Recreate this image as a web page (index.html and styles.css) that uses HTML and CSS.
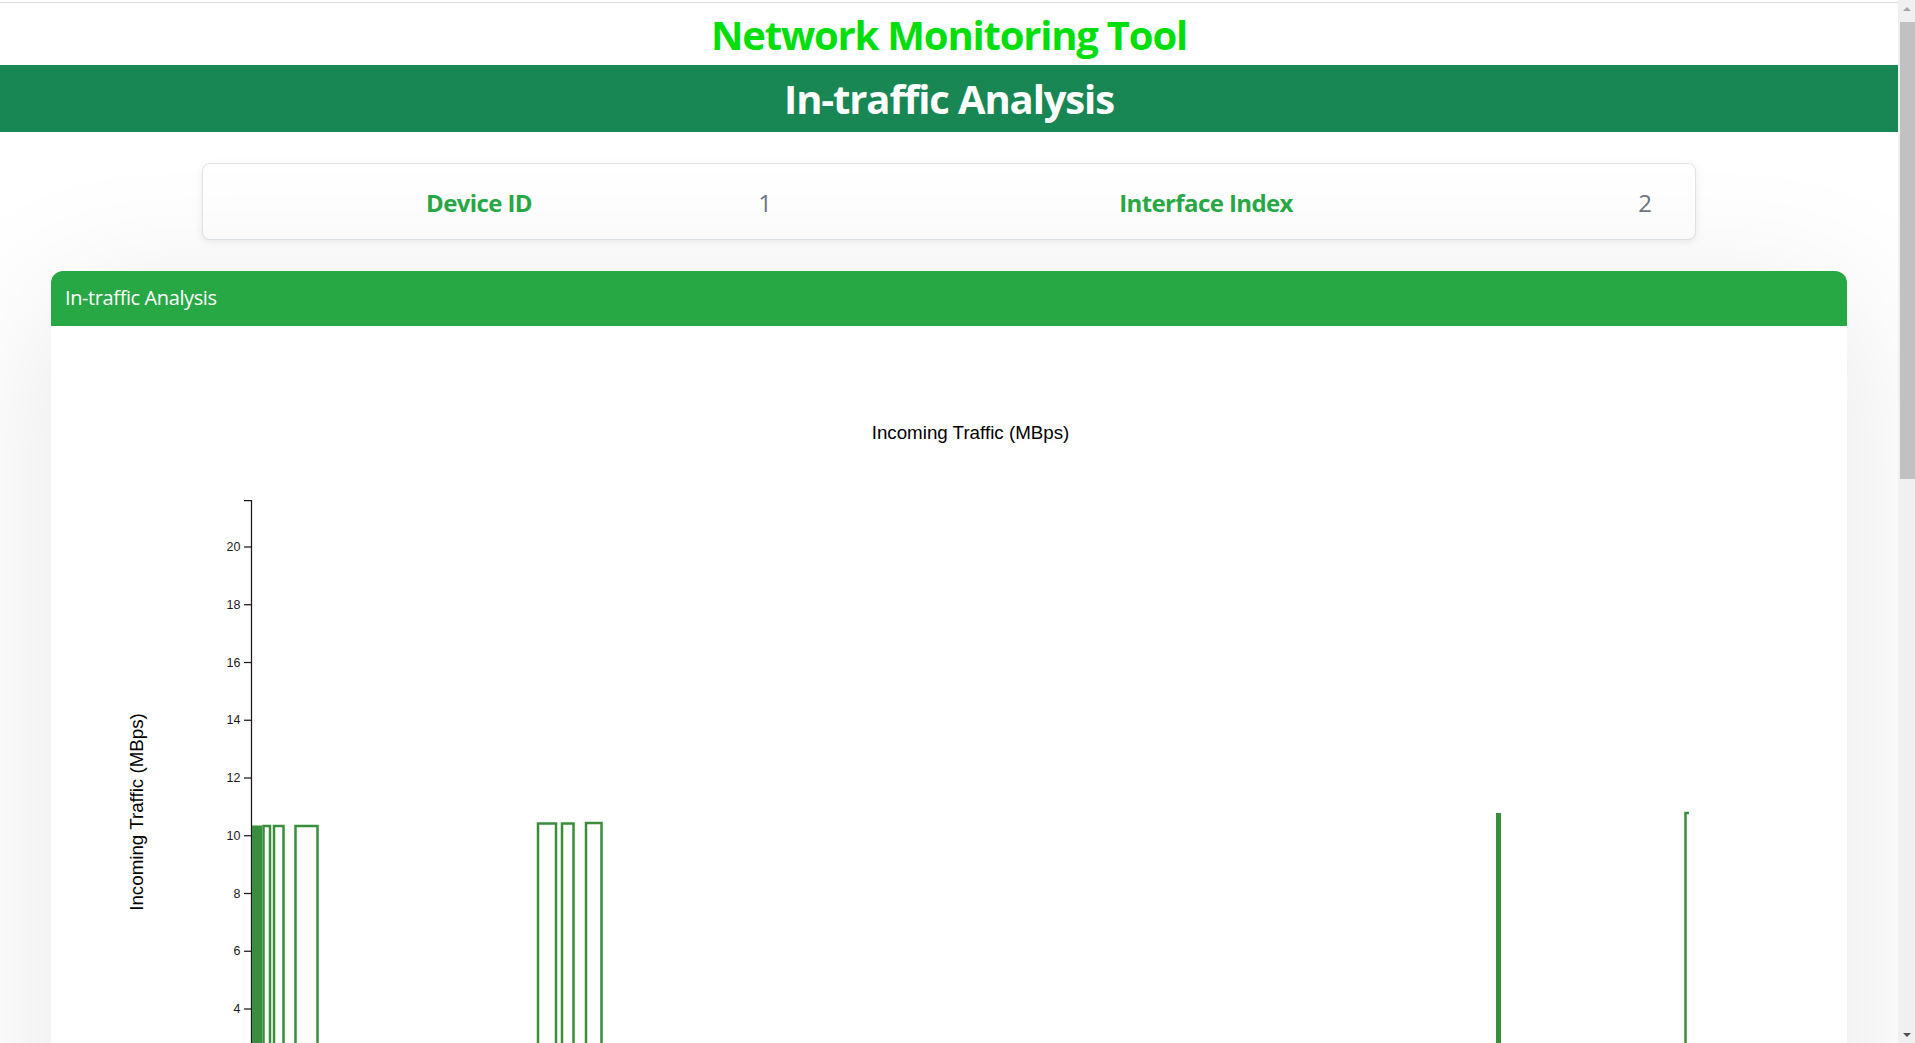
FILE: index.html
```html
<!DOCTYPE html>
<html lang="en">
<head>
<meta charset="utf-8">
<title>Network Monitoring Tool</title>
<link rel="stylesheet" href="styles.css">
</head>
<body>
<div class="page">
<div class="topline"></div>
<header class="site-header">
  <h1 class="site-title">Network Monitoring Tool</h1>
</header>
<div class="banner">
  <h2 class="banner-title">In-traffic Analysis</h2>
</div>
<main class="content">
  <section class="info-card">
    <div class="info-label">Device ID</div>
    <div class="info-value">1</div>
    <div class="info-label">Interface Index</div>
    <div class="info-value">2</div>
  </section>
  <section class="panel">
    <div class="panel-header">In-traffic Analysis</div>
    <div class="panel-body">
      <svg class="chart" width="1796" height="1940" viewBox="51 326 1796 1940" xmlns="http://www.w3.org/2000/svg">
        <text class="chart-title" x="970.5" y="438.5" text-anchor="middle">Incoming Traffic (MBps)</text>
        <text class="axis-title" transform="translate(143,812) rotate(-90)" text-anchor="middle">Incoming Traffic (MBps)</text>
        <g class="y-axis">
          <path class="domain" d="M244,500.5H251.5V1124.5H244"/>
          <g class="tick"><line x1="244" x2="251.5" y1="547" y2="547"/><text x="240.5" y="551">20</text></g>
          <g class="tick"><line x1="244" x2="251.5" y1="604.75" y2="604.75"/><text x="240.5" y="608.75">18</text></g>
          <g class="tick"><line x1="244" x2="251.5" y1="662.5" y2="662.5"/><text x="240.5" y="666.5">16</text></g>
          <g class="tick"><line x1="244" x2="251.5" y1="720.25" y2="720.25"/><text x="240.5" y="724.25">14</text></g>
          <g class="tick"><line x1="244" x2="251.5" y1="778" y2="778"/><text x="240.5" y="782">12</text></g>
          <g class="tick"><line x1="244" x2="251.5" y1="835.75" y2="835.75"/><text x="240.5" y="839.75">10</text></g>
          <g class="tick"><line x1="244" x2="251.5" y1="893.5" y2="893.5"/><text x="240.5" y="897.5">8</text></g>
          <g class="tick"><line x1="244" x2="251.5" y1="951.25" y2="951.25"/><text x="240.5" y="955.25">6</text></g>
          <g class="tick"><line x1="244" x2="251.5" y1="1009" y2="1009"/><text x="240.5" y="1013">4</text></g>
          <g class="tick"><line x1="244" x2="251.5" y1="1066.75" y2="1066.75"/></g>
          <g class="tick"><line x1="244" x2="251.5" y1="1124.5" y2="1124.5"/></g>
        </g>
        <g class="bars">
          <rect class="bar-solid" x="252" y="825.5" width="10" height="299"/>
          <rect class="bar" x="263.5" y="826" width="6.5" height="298.5"/>
          <rect class="bar" x="274" y="826" width="9.5" height="298.5"/>
          <rect class="bar" x="295.5" y="826" width="22" height="298.5"/>
          <rect class="bar" x="538" y="823.5" width="18" height="301"/>
          <rect class="bar" x="562" y="823.5" width="11.5" height="301"/>
          <rect class="bar" x="586" y="823" width="15.5" height="301.5"/>
          <rect class="bar-solid" x="1496" y="813" width="5" height="311.5"/>
          <path class="bar-line" d="M1685.5,1124.5V813H1689"/>
        </g>
        <path class="x-axis" d="M251.5,1124.5H1830"/>
      </svg>
    </div>
  </section>
</main>
</div>
<div class="scrollbar" aria-hidden="true">
  <div class="sb-btn sb-up"></div>
  <div class="sb-thumb"></div>
  <div class="sb-track"></div>
  <div class="sb-btn sb-down"></div>
</div>
</body>
</html>
```
FILE: styles.css
```css
html, body {
  margin: 0;
  padding: 0;
}

body {
  display: flex;
  height: 100vh;
  overflow: hidden;
  font-family: "Open Sans", "Noto Sans", "DejaVu Sans", sans-serif;
  background: #ffffff;
  color: #212529;
}

.page {
  flex: 1;
  min-width: 0;
  overflow: hidden;
}

.scrollbar {
  flex: none;
  width: 17px;
  display: flex;
  flex-direction: column;
  background: #f0f0f0;
}

.sb-btn {
  height: 17px;
  display: flex;
  align-items: center;
  justify-content: center;
}

.sb-up::before {
  content: "";
  border-left: 4px solid transparent;
  border-right: 4px solid transparent;
  border-bottom: 4px solid #a3a3a3;
}

.sb-down::before {
  content: "";
  border-left: 4px solid transparent;
  border-right: 4px solid transparent;
  border-top: 4px solid #505050;
}

.sb-thumb {
  height: 457px;
  margin: 5px 0 0 2px;
  background: #c1c1c1;
}

.sb-track {
  flex: 1;
}

.topline {
  height: 2px;
  border-bottom: 1px solid #dedede;
}

.site-title {
  margin: 0;
  height: 62px;
  box-sizing: border-box;
  padding-top: 8px;
  font-size: 40px;
  line-height: 48px;
  font-weight: 700;
  letter-spacing: -0.03em;
  color: #00de0c;
  text-align: center;
}

.banner {
  background: #198754;
  height: 67px;
  box-sizing: border-box;
  padding-top: 10px;
}

.banner-title {
  margin: 0;
  font-size: 40px;
  line-height: 48px;
  font-weight: 700;
  letter-spacing: -0.028em;
  color: #ffffff;
  text-align: center;
}

.content {
  padding-top: 31px;
}

.info-card {
  width: 1494px;
  height: 77px;
  margin: 0 auto 31px;
  box-sizing: border-box;
  padding: 2px 27px 0 15px;
  display: grid;
  grid-template-columns: 522fr 50fr 832fr 46fr;
  align-items: center;
  background: #ffffff;
  border: 1px solid #e2e5e8;
  border-radius: 8px;
  box-shadow: 0 2px 8px rgba(0, 0, 0, 0.08);
  font-size: 24px;
  line-height: 34px;
  text-align: center;
}

.info-label {
  font-weight: 700;
  color: #28a745;
  letter-spacing: -0.025em;
}

.info-value {
  color: #6c757d;
}

.panel {
  width: 1796px;
  margin: 0 auto 31px;
  background: #ffffff;
  border-radius: 12px 12px 0 0;
  box-shadow: 0 30px 150px rgba(0, 0, 0, 0.1);
}

.panel-header {
  background: #28a745;
  color: #ffffff;
  font-size: 20px;
  line-height: 30px;
  letter-spacing: -0.02em;
  padding: 12px 14px 13px;
  border-radius: 12px 12px 0 0;
}

.panel-body {
  background: #ffffff;
}

.chart {
  display: block;
  font-family: "Liberation Sans", Arial, sans-serif;
}

.chart-title,
.axis-title {
  font-size: 18.75px;
  fill: #000000;
}

.y-axis .domain,
.y-axis line,
.x-axis {
  stroke: #1a1a1a;
  stroke-width: 1.25;
  fill: none;
}

.y-axis text {
  font-size: 12.5px;
  fill: #1a1a1a;
  text-anchor: end;
}

.bar {
  fill: none;
  stroke: #388e3c;
  stroke-width: 2.5;
}

.bar-solid {
  fill: #388e3c;
}

.bar-line {
  fill: none;
  stroke: #388e3c;
  stroke-width: 2.5;
}
```
